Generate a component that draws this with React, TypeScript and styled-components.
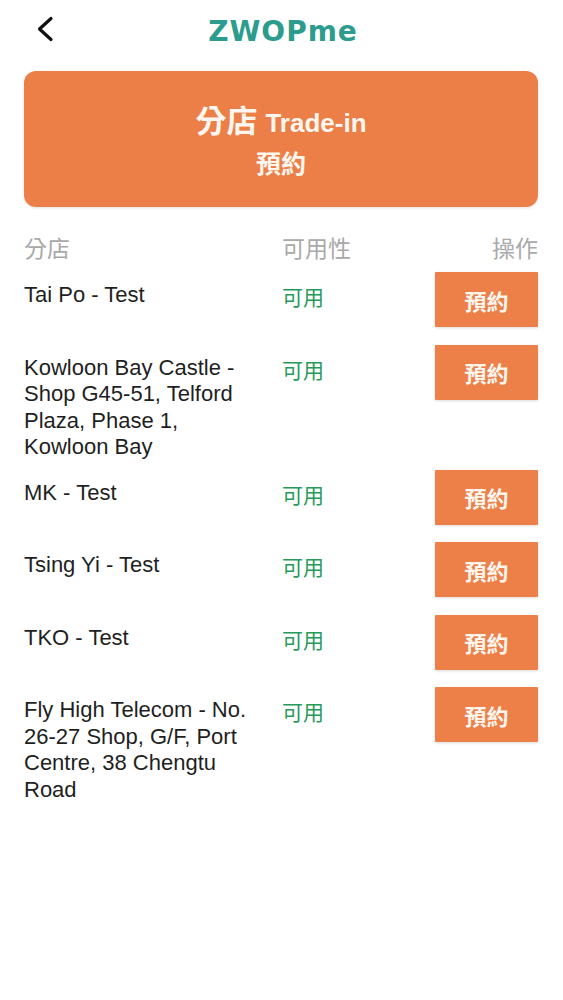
import styled, { createGlobalStyle } from "styled-components";

const branches = [
  { id: 1, name: "Tai Po - Test" },
  { id: 2, name: "Kowloon Bay Castle - Shop G45-51, Telford Plaza, Phase 1, Kowloon Bay" },
  { id: 3, name: "MK - Test" },
  { id: 4, name: "Tsing Yi - Test" },
  { id: 5, name: "TKO - Test" },
  { id: 6, name: "Fly High Telecom - No. 26-27 Shop, G/F, Port Centre, 38 Chengtu Road" },
];

const App = () => {
  return (
    <>
      <GlobalStyle />
      <Page>
        <TopBar>
          <BackButton aria-label="back">
            <svg width="20" height="26" viewBox="0 0 20 26" fill="none">
              <path
                d="M16 2.5 L4.5 13 L16 23.5"
                stroke="#111"
                strokeWidth="3.2"
                strokeLinecap="round"
                strokeLinejoin="round"
              />
            </svg>
          </BackButton>
          <Title>ZWOPme</Title>
          <span />
        </TopBar>

        <Banner>
          <BannerLine>
            <BannerCjk>分店</BannerCjk>
            <BannerLatin>Trade-in</BannerLatin>
          </BannerLine>
          <BannerSub>預約</BannerSub>
        </Banner>

        <HeadRow>
          <HeadCell>分店</HeadCell>
          <HeadCell>可用性</HeadCell>
          <HeadCell $right>操作</HeadCell>
        </HeadRow>

        {branches.map((b) => (
          <Row key={b.id}>
            <Name>{b.name}</Name>
            <Status>可用</Status>
            <BookButton>預約</BookButton>
          </Row>
        ))}
      </Page>
    </>
  );
};
export default App;

const GlobalStyle = createGlobalStyle`
  html, body {
    margin: 0;
    padding: 0;
    background: #ffffff;
  }
  body {
    font-family: "Liberation Sans", "Noto Sans CJK TC", sans-serif;
    color: #1f1f1f;
  }
`;

const Page = styled.div`
  width: 563px;
  box-sizing: border-box;
  padding: 0 25px 0 24px;
  display: flex;
  flex-direction: column;
`;

const TopBar = styled.div`
  height: 62px;
  display: grid;
  grid-template-columns: 1fr auto 1fr;
  align-items: center;
`;

const BackButton = styled.button`
  width: 30px;
  height: 30px;
  margin-left: 6px;
  margin-top: -4px;
  padding: 0;
  border: none;
  background: none;
  display: flex;
  align-items: center;
  justify-content: center;
`;

const Title = styled.div`
  font-family: "DejaVu Sans", "Liberation Sans", sans-serif;
  font-size: 28px;
  font-weight: 700;
  letter-spacing: 1px;
  color: #2b9c8e;
  margin-left: 4px;
`;

const Banner = styled.div`
  margin-top: 9px;
  height: 136px;
  border-radius: 12px;
  background: #ec7f48;
  box-shadow: 0 1px 3px rgba(0, 0, 0, 0.12);
  display: flex;
  flex-direction: column;
  align-items: center;
  justify-content: center;
  gap: 2px;
  color: #fff7ef;
`;

const BannerLine = styled.div`
  display: flex;
  align-items: baseline;
  gap: 8px;
  line-height: 40px;
`;

const BannerCjk = styled.span`
  font-family: "Noto Sans CJK TC", sans-serif;
  font-size: 31px;
  font-weight: 700;
`;

const BannerLatin = styled.span`
  font-size: 26px;
  font-weight: 700;
`;

const BannerSub = styled.div`
  font-family: "Noto Sans CJK TC", sans-serif;
  font-size: 25px;
  font-weight: 700;
  line-height: 34px;
`;

const HeadRow = styled.div`
  margin-top: 23px;
  margin-bottom: 12px;
  display: grid;
  grid-template-columns: 258px 1fr 103px;
  align-items: center;
  height: 30px;
`;

const HeadCell = styled.div<{ $right?: boolean }>`
  font-family: "Noto Sans CJK TC", sans-serif;
  font-size: 23px;
  color: #a9a9a9;
  text-align: ${(p) => (p.$right ? "right" : "left")};
`;

const Row = styled.div`
  display: grid;
  grid-template-columns: 258px 1fr 103px;
  align-items: start;
  padding-bottom: 9px;
`;

const Name = styled.div`
  padding-top: 10px;
  padding-right: 16px;
  font-size: 22px;
  line-height: 26.5px;
  color: #1f1f1f;
`;

const Status = styled.div`
  padding-top: 11px;
  font-family: "Noto Sans CJK TC", sans-serif;
  font-size: 21px;
  line-height: 26px;
  color: #279a5b;
`;

const BookButton = styled.button`
  width: 103px;
  height: 55px;
  margin-bottom: 8.5px;
  border: none;
  border-radius: 1px;
  background: #ed8049;
  box-shadow: 0 1px 3px rgba(0, 0, 0, 0.15);
  color: #fff7ef;
  font-family: "Noto Sans CJK TC", sans-serif;
  font-size: 22px;
  font-weight: 700;
  padding: 0;
`;
